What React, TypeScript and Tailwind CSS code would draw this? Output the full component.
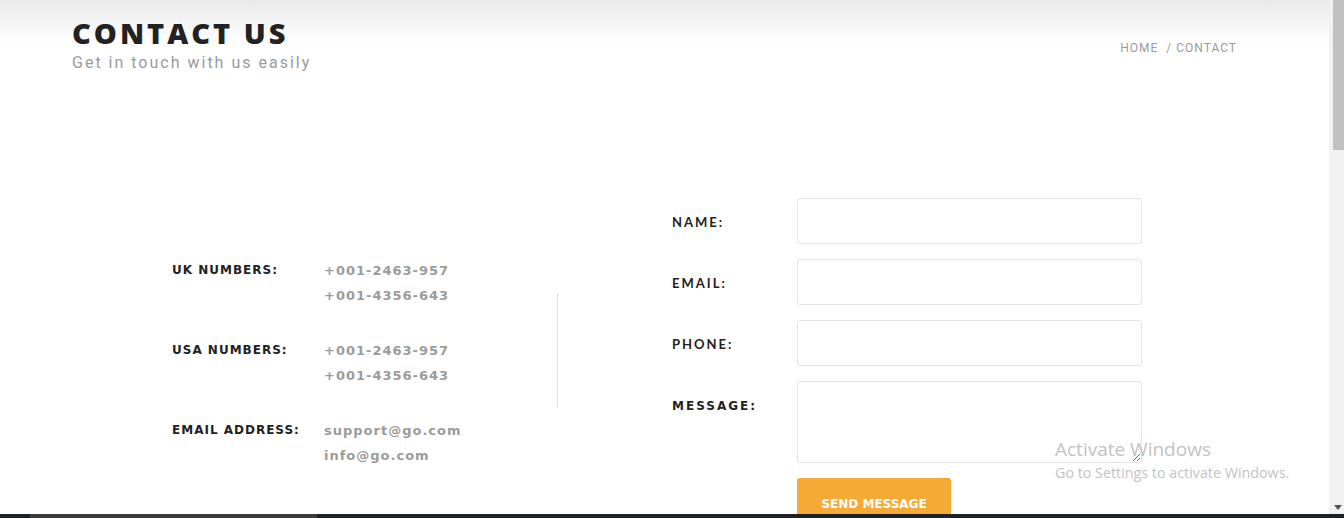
import React from "react";

const poppins = { fontFamily: '"DejaVu Sans", "Open Sans", sans-serif' };

const infoGroups = [
  { label: "UK NUMBERS:", values: ["+001-2463-957", "+001-4356-643"] },
  { label: "USA NUMBERS:", values: ["+001-2463-957", "+001-4356-643"] },
  { label: "EMAIL ADDRESS:", values: ["support@go.com", "info@go.com"] },
];

const fields = ["NAME:", "EMAIL:", "PHONE:"];

function Header() {
  return (
    <div className="shrink-0 flex items-start justify-between h-[96px] pl-[72px] pr-[92px] pt-[16px] bg-linear-to-b from-[#e9e9e9] via-white via-[45%] to-white">
      <div>
        <h1 className="text-[29px] leading-[34px] font-extrabold tracking-[3px] text-[#222] font-['Open_Sans',sans-serif]">
          CONTACT US
        </h1>
        <p className="mt-[3px] text-[16px] leading-[20px] tracking-[2px] text-[#9a9a9a] font-['Roboto',sans-serif]">
          Get in touch with us easily
        </p>
      </div>
      <div className="mt-[23px] text-[12px] tracking-[1px] text-[#9a9a9a] font-['Roboto',sans-serif]">
        HOME <span className="ml-[4px]">/</span> CONTACT
      </div>
    </div>
  );
}

function ContactInfo() {
  return (
    <div className="shrink-0 w-[557px] pl-[172px] pt-[162px] flex flex-col gap-[30px]">
      {infoGroups.map((g) => (
        <div key={g.label} className="flex">
          <div className="w-[152px] shrink-0 whitespace-nowrap text-[12px] leading-[25px] font-bold tracking-[1px] text-[#222]" style={poppins}>
            {g.label}
          </div>
          <div className="flex flex-col">
            {g.values.map((v) => (
              <span key={v} className="whitespace-nowrap text-[13px] leading-[25px] font-bold tracking-[1px] text-[#9b9b9b]" style={poppins}>
                {v}
              </span>
            ))}
          </div>
        </div>
      ))}
    </div>
  );
}

function ContactForm() {
  return (
    <div className="shrink-0 pl-[114px] pt-[102px] flex flex-col gap-[15px]">
      {fields.map((f) => (
        <div key={f} className="flex items-center">
          <label className="w-[125px] pt-[3px] text-[13px] font-bold tracking-[2px] text-[#222] font-['Lato',sans-serif]">
            {f}
          </label>
          <input className="w-[345px] h-[46px] border border-[#e4e4e4] rounded-[3px] bg-white outline-none" />
        </div>
      ))}
      <div className="flex items-start">
        <label className="w-[125px] pt-[16px] text-[12px] font-bold tracking-[2px] text-[#222]" style={poppins}>
          MESSAGE:
        </label>
        <textarea className="w-[345px] h-[82px] border border-[#e4e4e4] rounded-[3px] bg-white outline-none" />
      </div>
      <div className="flex">
        <div className="w-[125px]" />
        <button className="w-[154px] h-[50px] rounded-[3px] bg-[#f5aa35] text-white text-[12px] font-bold pt-[1px]" style={poppins}>
          SEND MESSAGE
        </button>
      </div>
    </div>
  );
}

export default function App() {
  return (
    <div className="w-[1344px] h-[518px] overflow-hidden flex flex-col bg-white">
      <div className="flex h-[514px] shrink-0">
        <div className="relative flex-1 flex flex-col overflow-hidden">
          <Header />
          <div className="flex">
            <ContactInfo />
            <div className="shrink-0 mt-[197px] w-px h-[115px] bg-[#e3e3e3]" />
            <ContactForm />
          </div>
          <div className="absolute left-[1055px] top-[437px] text-[#c3c3c3] font-['Open_Sans',sans-serif]">
            <div className="text-[19px] leading-[24px]">Activate Windows</div>
            <div className="text-[14.3px] leading-[20px] mt-[2px]">Go to Settings to activate Windows.</div>
          </div>
        </div>
        <div className="w-[15px] bg-[#f1f1f1] flex flex-col justify-between items-end">
          <div className="w-[11px] h-[150px] bg-[#c1c1c1]" />
          <div className="w-0 h-0 mr-[2px] mb-[4px] border-l-[4px] border-r-[4px] border-t-[5px] border-l-transparent border-r-transparent border-t-[#505050]" />
        </div>
      </div>
      <div className="h-[4px] flex bg-[#1c2226]">
        <div className="w-[30px]" />
        <div className="w-[287px] bg-[#3b3b3b]" />
        <div className="flex-1" />
      </div>
    </div>
  );
}
